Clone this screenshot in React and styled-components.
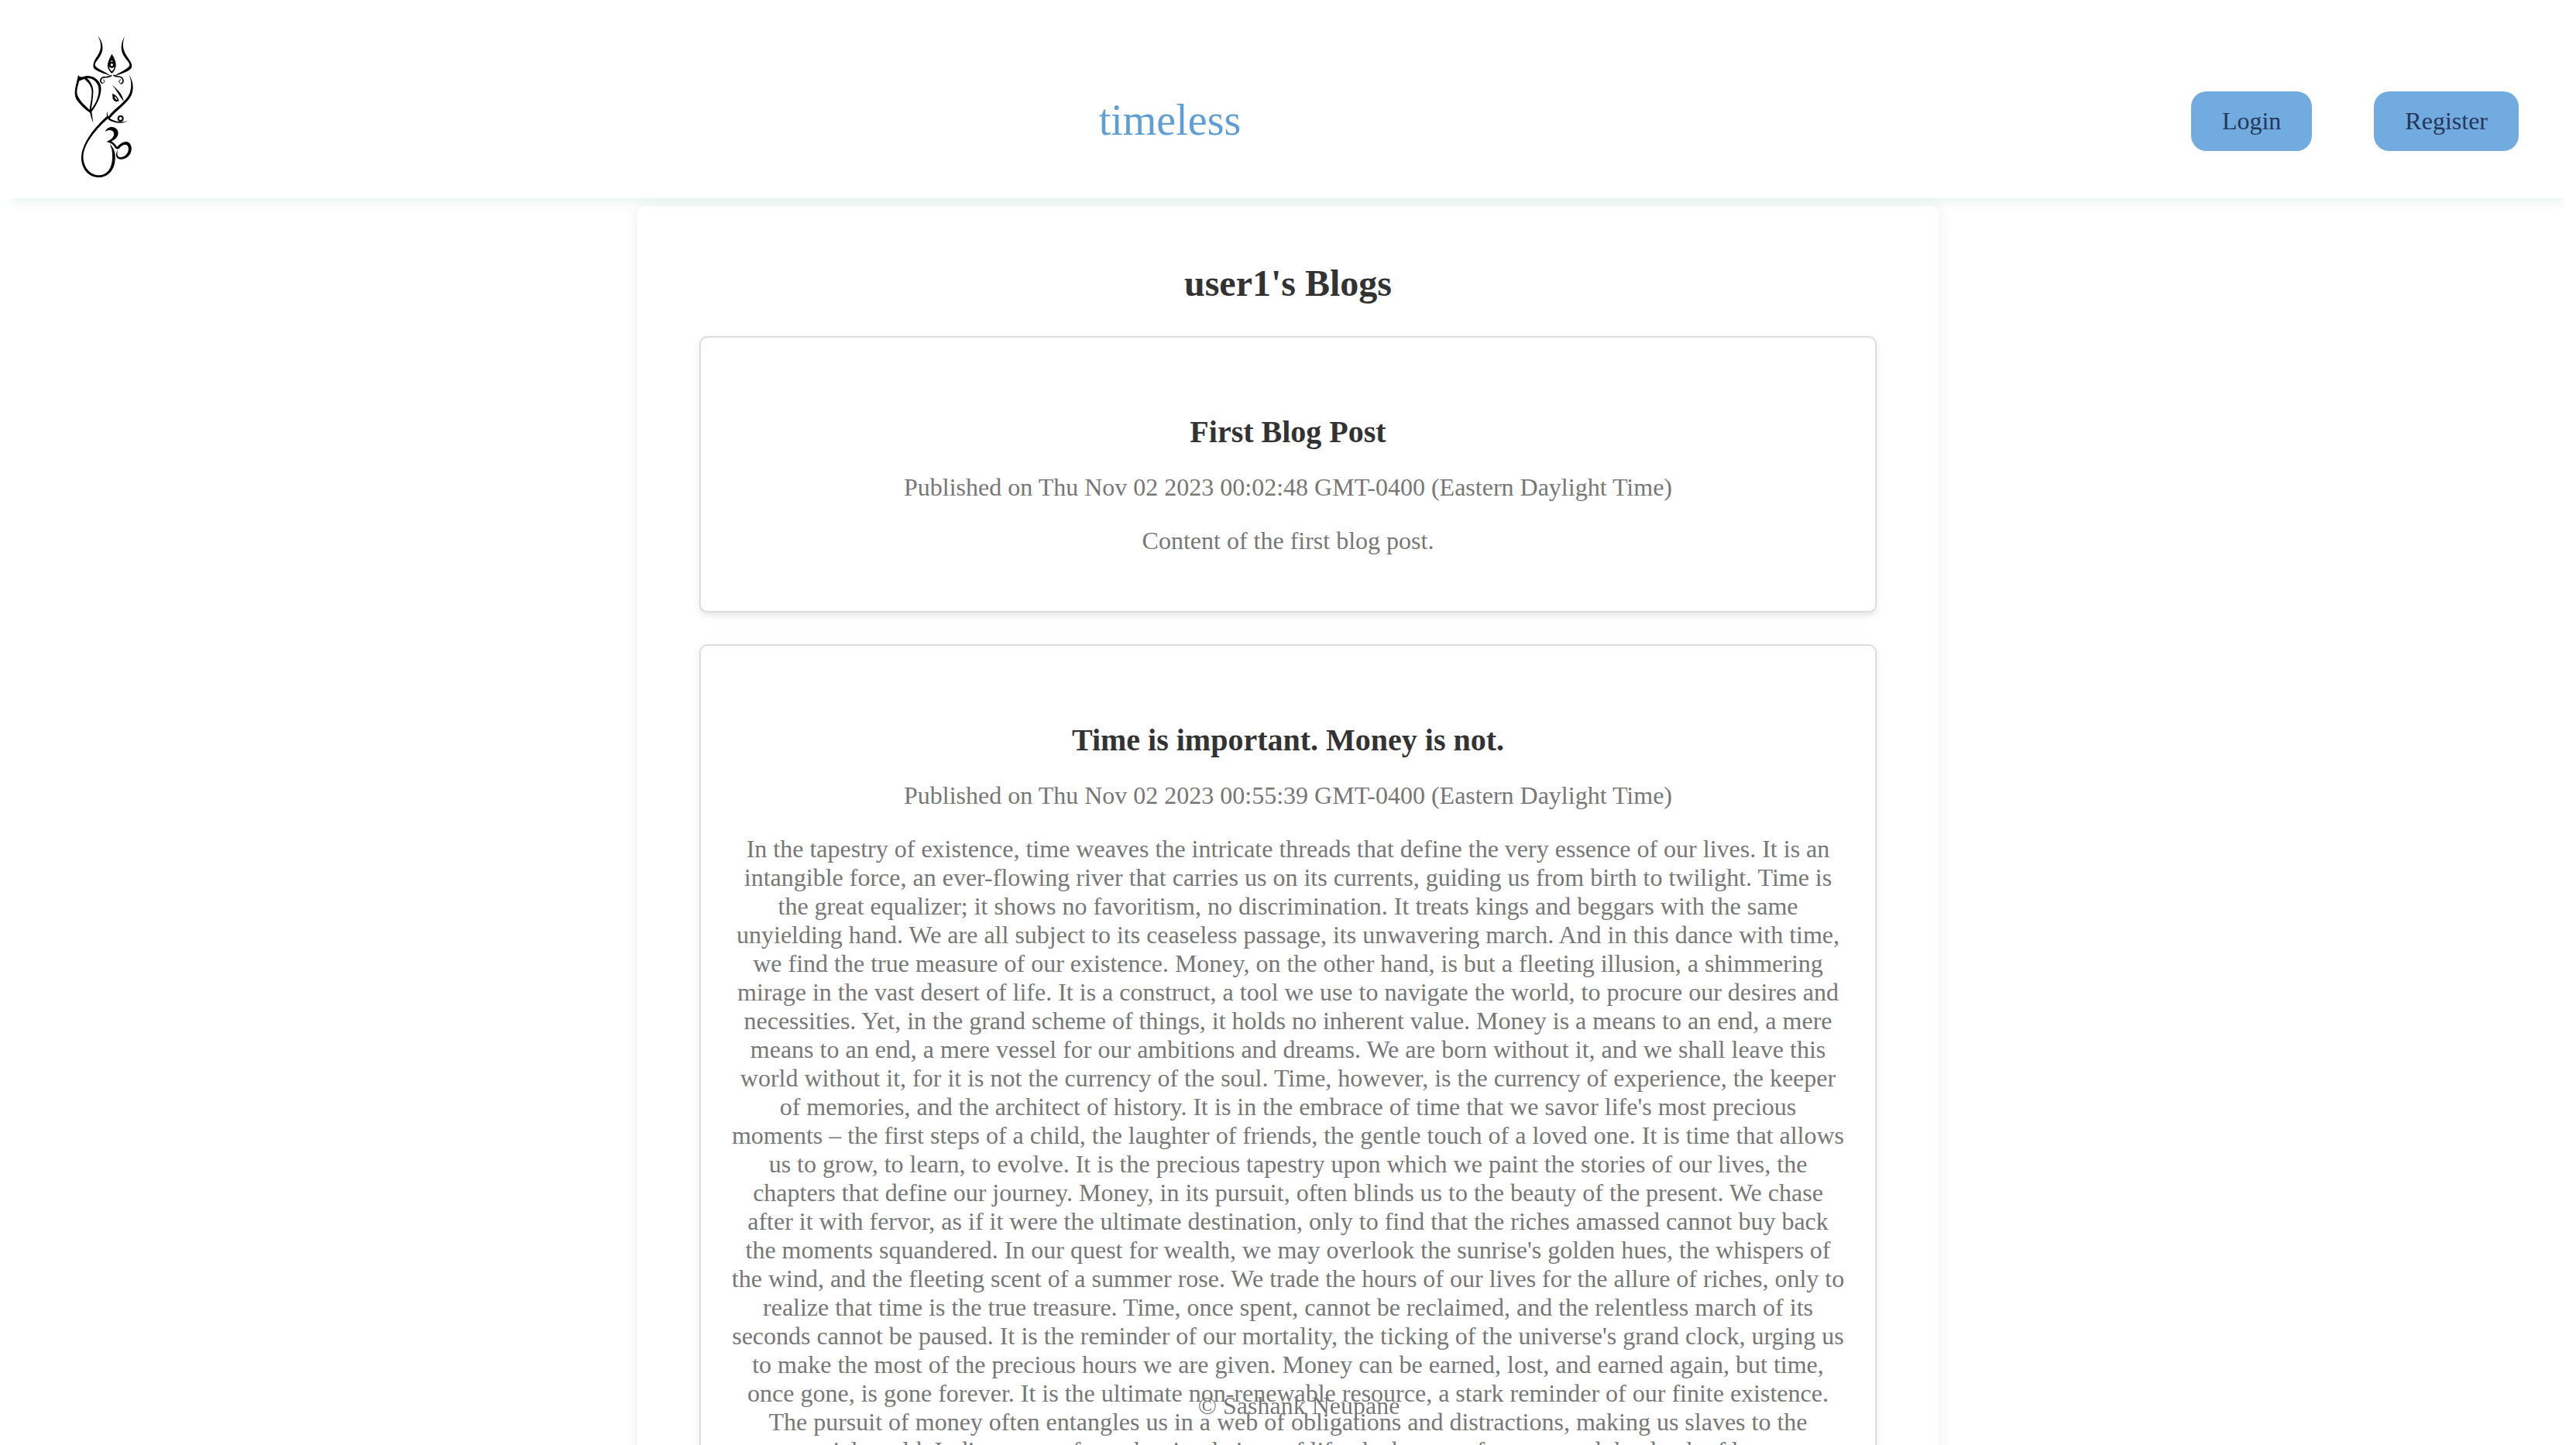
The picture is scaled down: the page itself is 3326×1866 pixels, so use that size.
import React from 'react'
import styled, { createGlobalStyle } from 'styled-components'

const LONG_POST = `In the tapestry of existence, time weaves the intricate threads that define the very essence of our lives. It is an intangible force, an ever-flowing river that carries us on its currents, guiding us from birth to twilight. Time is the great equalizer; it shows no favoritism, no discrimination. It treats kings and beggars with the same unyielding hand. We are all subject to its ceaseless passage, its unwavering march. And in this dance with time, we find the true measure of our existence. Money, on the other hand, is but a fleeting illusion, a shimmering mirage in the vast desert of life. It is a construct, a tool we use to navigate the world, to procure our desires and necessities. Yet, in the grand scheme of things, it holds no inherent value. Money is a means to an end, a mere means to an end, a mere vessel for our ambitions and dreams. We are born without it, and we shall leave this world without it, for it is not the currency of the soul. Time, however, is the currency of experience, the keeper of memories, and the architect of history. It is in the embrace of time that we savor life's most precious
moments – the first steps of a child, the laughter of friends, the gentle touch of a loved one. It is time that allows us to grow, to learn, to evolve. It is the precious tapestry upon which we paint the stories of our lives, the chapters that define our journey. Money, in its pursuit, often blinds us to the beauty of the present. We chase after it with fervor, as if it were the ultimate destination, only to find that the riches amassed cannot buy back the moments squandered. In our quest for wealth, we may overlook the sunrise's golden hues, the whispers of the wind, and the fleeting scent of a summer rose. We trade the hours of our lives for the allure of riches, only to realize that time is the true treasure. Time, once spent, cannot be reclaimed, and the relentless march of its seconds cannot be paused. It is the reminder of our mortality, the ticking of the universe's grand clock, urging us to make the most of the precious hours we are given. Money can be earned, lost, and earned again, but time, once gone, is gone forever. It is the ultimate non-renewable resource, a stark reminder of our finite existence. The pursuit of money often entangles us in a web of obligations and distractions, making us slaves to the material world. It distracts us from the simple joys of life, the beauty of nature, and the depth of human connection.`

const posts = [
  {
    title: 'First Blog Post',
    date: 'Thu Nov 02 2023 00:02:48 GMT-0400 (Eastern Daylight Time)',
    body: 'Content of the first blog post.',
  },
  {
    title: 'Time is important. Money is not.',
    date: 'Thu Nov 02 2023 00:55:39 GMT-0400 (Eastern Daylight Time)',
    body: LONG_POST,
  },
]

function Logo() {
  return (
    <LogoSvg viewBox="0 0 390 630" aria-label="logo">
      <g fill="#000">
        {/* trident */}
        <path d="M172 52C194 78 196 108 180 132C168 150 158 158 162 168C170 180 200 190 224 208C196 198 168 190 157 178C150 164 158 148 170 130C184 110 190 84 172 52Z" />
        <path d="M276 54C260 80 258 108 274 132C286 150 298 158 294 168C286 182 258 192 234 208C262 200 292 190 302 176C308 162 296 148 284 130C270 108 264 84 276 54Z" />
        {/* third eye */}
        <path fillRule="evenodd" d="M226 122C238 140 246 160 240 176C236 188 230 194 226 198C220 192 212 184 210 172C208 156 218 138 226 122ZM226 146C232 156 238 166 236 174C234 182 230 186 226 190C220 184 216 180 215 172C214 162 220 154 226 146Z" />
        <path fillRule="evenodd" d="M226 152A12 12 0 1 0 226.1 176A12 12 0 1 0 226 152ZM226 159A5 5 0 1 1 225.9 169A5 5 0 1 1 226 159Z" />
        {/* eye and brow */}
        <path d="M228 242C246 258 268 276 272 306C258 288 244 262 228 242Z" />
        <path fillRule="evenodd" d="M228 276C240 278 252 292 254 304C244 310 234 304 230 296ZM236 286C238 296 242 300 248 300C246 294 242 290 236 286Z" />
        {/* ear */}
        <path fillRule="evenodd" d="M96 204C104 214 110 212 124 208C146 204 172 216 182 240C192 270 172 314 148 346C150 360 152 376 154 390C150 378 144 362 142 350C124 338 100 316 88 296C76 272 88 244 96 204ZM100 226C94 250 86 268 96 288C106 308 124 324 140 338C142 318 150 290 148 262C146 246 136 232 118 218C114 222 106 224 100 226ZM130 216C148 232 156 254 154 276C152 296 150 316 146 336C166 312 180 278 174 248C168 228 150 214 130 216Z" />
        {/* om body */}
        <path d="M212 344C206 352 210 360 216 368C180 398 130 452 118 500C108 540 128 586 172 592C210 594 236 560 226 492L218 470C228 480 236 492 238 506C246 572 210 602 170 600C122 596 98 546 112 496C126 446 170 396 208 362C204 356 206 348 212 344Z" />
        <path d="M212 366C236 330 282 310 296 272C304 248 302 224 292 202C310 228 312 258 302 282C286 314 242 342 218 372C240 386 268 388 290 380C268 394 236 392 212 376Z" />
        <path d="M200 424C206 404 232 398 246 414C258 432 246 452 224 460C236 468 244 478 246 482C268 458 296 452 302 484C306 508 284 534 258 530C240 526 238 508 250 494C244 510 248 522 260 522C278 522 294 504 290 484C286 468 270 470 254 488C248 494 240 490 234 478C226 466 214 466 206 462C226 454 240 440 232 424C224 414 210 416 200 424Z" />
      </g>
      <g fill="none" stroke="#000">
        <circle cx="260" cy="372" r="9" strokeWidth="6" />
        <path d="M190 236C176 228 184 212 198 212C212 214 222 206 226 206" strokeWidth="5" />
        <path d="M190 236C200 232 200 222 192 222" strokeWidth="3" />
        <path d="M262 238C276 230 270 210 252 210C244 210 238 208 232 204" strokeWidth="5" />
        <path d="M262 238C252 234 252 222 262 222" strokeWidth="3" />
      </g>
    </LogoSvg>
  )
}

function Post({ title, date, body }) {
  return (
    <PostCard>
      <PostTitle>{title}</PostTitle>
      <PostMeta>Published on {date}</PostMeta>
      <PostBody>{body}</PostBody>
    </PostCard>
  )
}

export default function App() {
  return (
    <>
      <GlobalStyle />
      <Header>
        <LogoBox>
          <Logo />
        </LogoBox>
        <Brand>timeless</Brand>
        <Nav>
          <NavButton>Login</NavButton>
          <NavButton>Register</NavButton>
        </Nav>
      </Header>
      <Main>
        <Heading>user1's Blogs</Heading>
        {posts.map((post) => (
          <Post key={post.title} {...post} />
        ))}
      </Main>
      <Footer>© Sashank Neupane</Footer>
    </>
  )
}

const GlobalStyle = createGlobalStyle`
  html, body {
    height: 100%;
    overflow: hidden;
  }
  body {
    margin: 16px 14px 0;
    background: #fff;
    font-family: "Liberation Serif", "Times New Roman", serif;
    font-size: 32px;
    color: #333;
  }
`

const Header = styled.header`
  display: flex;
  justify-content: space-between;
  align-items: center;
  height: 240px;
  padding-right: 60px;
  background: #fff;
  box-shadow: 0 3px 14px rgba(120, 190, 190, 0.22);
`

const LogoBox = styled.div`
  width: 178px;
  padding-left: 55px;
  box-sizing: border-box;
`

const LogoSvg = styled.svg`
  display: block;
  width: 130px;
  height: 210px;
  margin-top: -4px;
`

const Brand = styled.div`
  margin-top: 38px;
  font-size: 56px;
  color: #5f9fd6;
`

const Nav = styled.nav`
  display: flex;
  gap: 80px;
  margin-top: 40px;
`

const NavButton = styled.button`
  padding: 20px 40px;
  border: none;
  border-radius: 20px;
  background: #72abdf;
  font-family: inherit;
  font-size: 32px;
  color: #25375a;
`

const Main = styled.main`
  width: 1680px;
  margin: 10px auto 0;
  padding: 40px 80px;
  border-radius: 10px;
  background: #fff;
  box-shadow: 0 0 20px rgba(0, 0, 0, 0.07);
  box-sizing: border-box;
`

const Heading = styled.h2`
  margin: 32px 0 41px;
  font-size: 48px;
  line-height: 55px;
  text-align: center;
  color: #333;
`

const PostCard = styled.article`
  margin-bottom: 41px;
  padding: 98px 39px 40px;
  border: 2px solid #ddd;
  border-radius: 10px;
  background: #fff;
  box-shadow: 0 4px 8px rgba(0, 0, 0, 0.1);
  text-align: center;
`

const PostTitle = styled.h3`
  margin: 0;
  font-size: 40px;
  color: #333;
`

const PostMeta = styled.p`
  margin: 30px 0 0;
  color: #777;
`

const PostBody = styled(PostMeta)`
  margin: 32px 0;
  white-space: pre-line;
`

const Footer = styled.footer`
  position: fixed;
  bottom: 32px;
  width: 100%;
  text-align: center;
  color: #777;
`
